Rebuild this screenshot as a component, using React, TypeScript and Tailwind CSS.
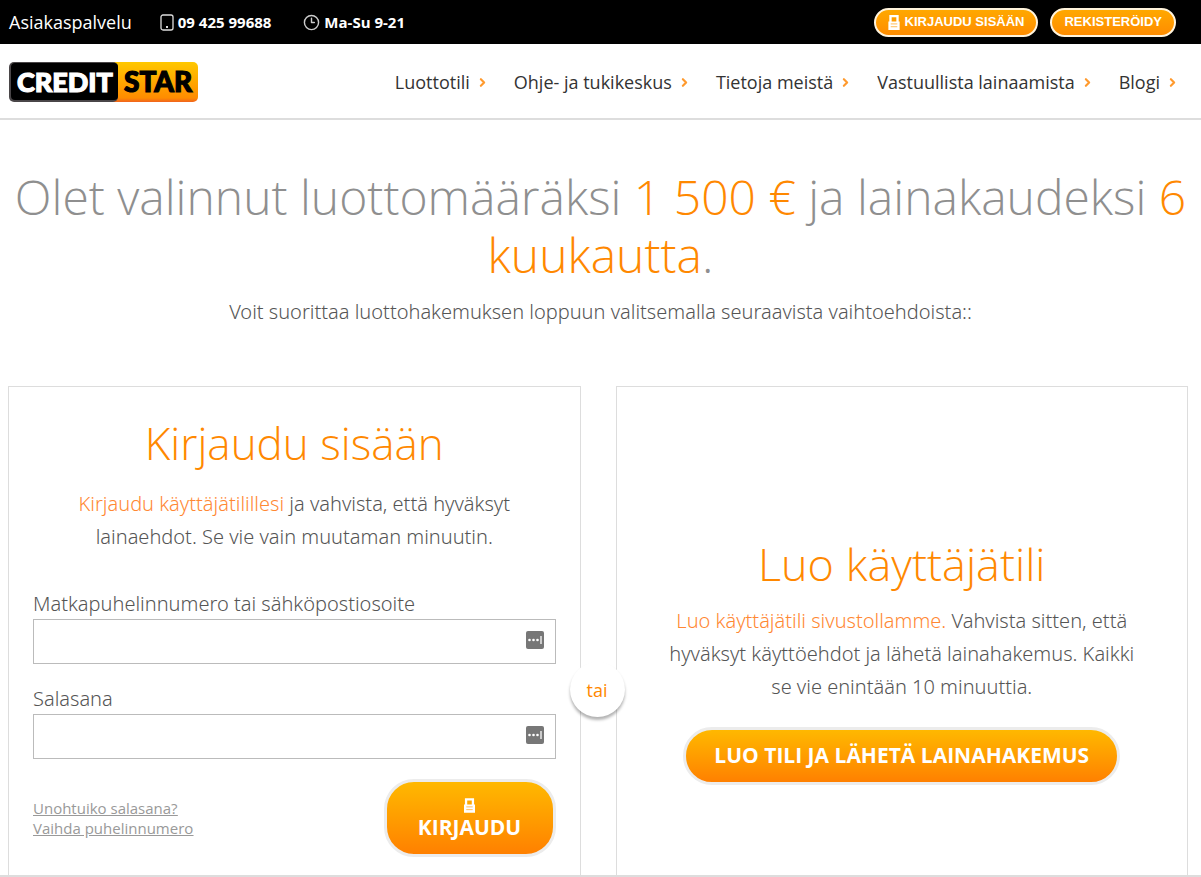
import { ChevronRight, Clock3 } from "lucide-react";

const navItems = [
  "Luottotili",
  "Ohje- ja tukikeskus",
  "Tietoja meistä",
  "Vastuullista lainaamista",
  "Blogi",
];

const fields = [
  { id: "login", label: "Matkapuhelinnumero tai sähköpostiosoite", type: "text" },
  { id: "password", label: "Salasana", type: "password" },
];

function LockIcon({ className }: { className: string }) {
  return (
    <svg viewBox="0 0 12 16" className={className} aria-hidden="true">
      <path d="M1 7V0h10v7h1v9H0V7zM3.500 7h5V2.500h-5z" fill="currentColor" fillRule="evenodd" />
      <path d="M2.500 9.500h7M2.500 12.500h7" stroke="#ffb84d" strokeWidth="1" />
    </svg>
  );
}

function PhoneIcon() {
  return (
    <svg viewBox="0 0 14 17" className="w-[14px] h-[17px]" fill="none" aria-hidden="true">
      <rect x="1" y="1" width="12" height="15" rx="2" stroke="#ddd" strokeWidth="1.300" />
      <rect x="6" y="12" width="2" height="2" fill="#ddd" />
    </svg>
  );
}

function PasswordManagerIcon() {
  return (
    <svg viewBox="0 0 18 18" className="absolute right-3 top-3 w-[18px] h-[18px] pointer-events-none" aria-hidden="true">
      <rect width="18" height="18" rx="2" fill="#777" />
      <g fill="#fff">
        <circle cx="3.500" cy="9" r="1.300" />
        <circle cx="7.500" cy="9" r="1.300" />
        <circle cx="11.500" cy="9" r="1.300" />
        <rect x="14" y="5" width="2" height="8" fill="#ccc" />
      </g>
    </svg>
  );
}

function Logo() {
  return (
    <a href="#" aria-label="Creditstar" className="block">
      <svg viewBox="0 0 190 40" className="w-[190px] h-[40px]">
        <defs>
          <linearGradient id="star" x1="0" y1="0" x2="0" y2="1">
            <stop offset="0" stopColor="#ffc800" />
            <stop offset="0.900" stopColor="#ff8c00" />
            <stop offset="1" stopColor="#f0641e" />
          </linearGradient>
        </defs>
        <rect x="90" width="99" height="40" rx="5" fill="url(#star)" />
        <rect width="109" height="40" rx="5" fill="#4a4648" />
        <rect x="2" y="1" width="107" height="37" rx="4" fill="#000" />
        <g fontFamily="Lato" fontWeight="900" strokeWidth="1.200">
          <text x="8" y="30" fontSize="27" fill="#fff" stroke="#fff">CREDIT</text>
          <text x="115" y="30" fontSize="28" fill="#000" stroke="#000">STAR</text>
        </g>
      </svg>
    </a>
  );
}

export default function App() {
  return (
    <div className="bg-white font-['Open_Sans',sans-serif] text-[#555]">
      <div className="flex h-11 items-center bg-black pl-[9px] pr-[25px] text-white">
        <span className="text-lg">Asiakaspalvelu</span>
        <span className="ml-7 flex items-center gap-1 text-[15px] font-bold">
          <PhoneIcon />
          09 425 99688
        </span>
        <span className="ml-8 flex items-center gap-1 text-[15px] font-bold">
          <Clock3 size={17} strokeWidth={2} className="text-[#ccc]" />
          Ma-Su 9-21
        </span>
        <div className="ml-auto flex gap-3 font-['Liberation_Sans',sans-serif] text-[13px] font-bold">
          <button className="flex h-[29px] items-center gap-[5px] rounded-full border-2 border-[#fff3dc] bg-linear-to-b from-[#ffa800] to-[#ff8c00] px-3">
            <LockIcon className="h-[15px] w-[12px]" />
            KIRJAUDU SISÄÄN
          </button>
          <button className="h-[29px] rounded-full border-2 border-[#fff3dc] bg-linear-to-b from-[#ffa800] to-[#ff8c00] px-3">
            REKISTERÖIDY
          </button>
        </div>
      </div>

      <header className="flex h-[76px] items-center justify-between border-b-2 border-[#ddd] pl-[9px] pr-[22px] pt-[2px]">
        <Logo />
        <nav className="flex gap-[25px] text-lg text-[#333]">
          {navItems.map((item) => (
            <a key={item} href="#" className="flex items-center gap-[6px]">
              {item}
              <ChevronRight size={13} strokeWidth={4} className="text-[#ff9a2e]" />
            </a>
          ))}
        </nav>
      </header>

      <main>
        <section className="pt-12 text-center font-light">
          <h1 className="text-5xl leading-[58px] text-[#8f8f8f]">
            Olet valinnut luottomääräksi <span className="text-[#ff8800]">1 500 €</span> ja lainakaudeksi{" "}
            <span className="text-[#ff8800]">6 kuukautta</span>.
          </h1>
          <p className="mt-3 font-['Noto_Sans',sans-serif] text-xl leading-8">
            Voit suorittaa luottohakemuksen loppuun valitsemalla seuraavista vaihtoehdoista::
          </p>
        </section>

        <div className="relative mt-[58px] grid grid-cols-2 gap-[35px] border-b-2 border-[#ddd] pl-2 pr-[13px]">
          <section className="border border-b-0 border-[#ddd] px-6 pb-[18px] pt-7">
            <h2 className="text-center text-[44px] font-light leading-[56px] text-[#ff8800]">Kirjaudu sisään</h2>
            <p className="mx-auto mt-4 max-w-[480px] text-center font-['Noto_Sans',sans-serif] text-xl font-light leading-[33px]">
              <a href="#" className="text-[#ff8833]">Kirjaudu käyttäjätilillesi</a> ja vahvista, että hyväksyt
              lainaehdot. Se vie vain muutaman minuutin.
            </p>
            <form className="mt-9">
              {fields.map((f) => (
                <div key={f.id} className="mb-5">
                  <label htmlFor={f.id} className="block font-['Noto_Sans',sans-serif] text-xl font-light leading-[30px]">{f.label}</label>
                  <div className="relative">
                    <input id={f.id} type={f.type} className="block h-[45px] w-full border border-[#bbb] px-3 pr-10" />
                    <PasswordManagerIcon />
                  </div>
                </div>
              ))}
              <div className="flex items-center justify-between">
                <div className="flex flex-col items-start text-[15px] leading-5 text-[#999] underline">
                  <a href="#">Unohtuiko salasana?</a>
                  <a href="#">Vaihda puhelinnumero</a>
                </div>
                <button className="flex h-[78px] w-[172px] flex-col items-center justify-center gap-[2px] rounded-[30px] border-[3px] border-[#ececec] bg-linear-to-b from-[#ffb800] to-[#ff8000] text-[21px] font-bold leading-6 text-white">
                  <LockIcon className="h-[15px] w-[11px]" />
                  KIRJAUDU
                </button>
              </div>
            </form>
          </section>

          <section className="flex flex-col items-center justify-center border border-b-0 border-[#ddd] px-6 pt-[78px] pb-5 text-center">
            <h2 className="text-[45px] font-light leading-[56px] text-[#ff8800]">Luo käyttäjätili</h2>
            <p className="mt-3 max-w-[480px] font-['Noto_Sans',sans-serif] text-xl font-light leading-[33px]">
              <a href="#" className="text-[#ff8833]">Luo käyttäjätili sivustollamme.</a> Vahvista sitten, että
              hyväksyt käyttöehdot ja lähetä lainahakemus. Kaikki se vie enintään 10 minuuttia.
            </p>
            <button className="mt-6 h-[58px] rounded-full border-[3px] border-[#ececec] bg-linear-to-b from-[#ffb800] to-[#ff8000] px-7 text-[21px] font-bold text-white">
              LUO TILI JA LÄHETÄ LAINAHAKEMUS
            </button>
          </section>

          <span className="absolute left-1/2 top-[276px] -ml-[31px] flex size-[55px] items-center justify-center rounded-full bg-white text-lg text-[#ff8800] shadow-[0_3px_3px_rgba(0,0,0,0.3)]">
            tai
          </span>
        </div>
      </main>
    </div>
  );
}
